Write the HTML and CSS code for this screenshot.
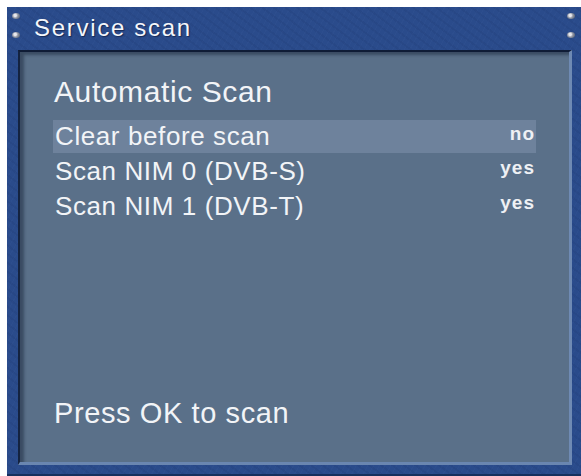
FILE: index.html
```html
<!DOCTYPE html>
<html>
<head>
<meta charset="utf-8">
<link rel="stylesheet" href="styles.css">
</head>
<body>
<div class="window">
  <div class="titlebar">
    <div class="screws"><span class="screw"></span><span class="screw"></span></div>
    <div class="title">Service scan</div>
    <div class="screws"><span class="screw"></span><span class="screw"></span></div>
  </div>
  <div class="panel">
    <div class="heading">Automatic Scan</div>
    <ul class="list">
      <li class="row selected"><span class="label">Clear before scan</span><span class="value">no</span></li>
      <li class="row"><span class="label">Scan NIM 0 (DVB-S)</span><span class="value">yes</span></li>
      <li class="row"><span class="label">Scan NIM 1 (DVB-T)</span><span class="value">yes</span></li>
    </ul>
    <div class="footer">Press OK to scan</div>
  </div>
</div>
</body>
</html>
```
FILE: styles.css
```css
html, body {
  margin: 0;
  padding: 0;
  background: #ffffff;
}
body {
  width: 581px;
  height: 476px;
  overflow: hidden;
  font-family: "Liberation Sans", Arial, sans-serif;
}
.window {
  box-sizing: border-box;
  margin: 7px 0 0 7px;
  width: 574px;
  height: 469px;
  display: flex;
  flex-direction: column;
  padding: 0 9px 9px 11px;
  border-bottom: 2px solid #16305e;
  background-color: #2a4b8b;
  background-image:
    repeating-linear-gradient(37deg, rgba(20,40,90,0.10) 0 2px, rgba(0,0,0,0) 2px 7px),
    repeating-linear-gradient(-61deg, rgba(80,110,170,0.08) 0 1px, rgba(0,0,0,0) 1px 5px);
}
.titlebar {
  height: 43px;
  margin: 0 -9px 0 -11px;
  display: flex;
  align-items: flex-start;
  padding: 0 6px 0 5px;
}
.screws {
  display: flex;
  flex-direction: column;
  gap: 13px;
  padding-top: 6px;
}
.screw {
  display: block;
  width: 8px;
  height: 6px;
  border-radius: 50%;
  background: radial-gradient(circle at 40% 40%, #e8e8ec 0 20%, #9096a4 45%, #4a5264 100%);
}
.title {
  flex: 1;
  padding-left: 14px;
  padding-top: 7px;
  color: #f4f6fb;
  font-size: 24px;
  letter-spacing: 1.7px;
  line-height: 27px;
  text-shadow: 1px 1px 1px rgba(10,20,50,0.6);
}
.panel {
  flex: 1;
  display: flex;
  flex-direction: column;
  background: #5a7089;
  border-top: 2px solid #0f1c36;
  border-left: 2px solid #142340;
  border-right: 3px solid #6f8ab3;
  border-bottom: 3px solid #6a86b0;
  box-shadow: inset 4px 3px 3px rgba(20,30,50,0.45);
  padding: 0 33px 31px 33px;
  color: #f2f4f7;
}
.heading {
  font-size: 30px;
  letter-spacing: 0.6px;
  line-height: 36px;
  padding: 22px 0 0 1px;
  height: 45px;
  margin-bottom: 1px;
  box-sizing: content-box;
}
.list {
  list-style: none;
  margin: 0;
  padding: 0;
  display: flex;
  flex-direction: column;
  gap: 1px;
}
.row {
  display: flex;
  justify-content: space-between;
  align-items: center;
  height: 33px;
  padding: 0 1px 0 2px;
}
.row + .row {
  height: 34px;
}
.row.selected {
  background: #6e829c;
}
.label {
  font-size: 26px;
  letter-spacing: 0.6px;
}
.value {
  font-size: 19px;
  font-weight: bold;
  letter-spacing: 1px;
  margin-bottom: 6px;
  color: #eef0f4;
}
.footer {
  margin-top: auto;
  font-size: 29px;
  letter-spacing: 0.6px;
  line-height: 36px;
  padding-left: 1px;
}
```
